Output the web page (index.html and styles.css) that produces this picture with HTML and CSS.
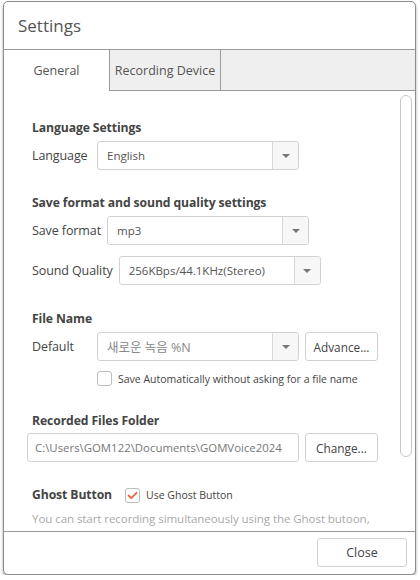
FILE: index.html
```html
<!DOCTYPE html>
<html>
<head>
<meta charset="utf-8">
<link rel="stylesheet" href="styles.css">
</head>
<body>
<div class="window">
  <div class="titlebar">Settings</div>
  <div class="tabs">
    <div class="tab active">General</div>
    <div class="tab">Recording Device</div>
    <div class="tab-fill"></div>
  </div>
  <div class="body">
    <div class="content">
      <div class="heading h-lang">Language Settings</div>
      <div class="row r-lang">
        <span class="label l-lang">Language</span>
        <div class="select"><span class="value">English</span><span class="arrow"><i></i></span></div>
      </div>

      <div class="heading h-fmt">Save format and sound quality settings</div>
      <div class="row r-fmt">
        <span class="label">Save format</span>
        <div class="select"><span class="value">mp3</span><span class="arrow"><i></i></span></div>
      </div>
      <div class="row r-qual">
        <span class="label">Sound Quality</span>
        <div class="select"><span class="value">256KBps/44.1KHz(Stereo)</span><span class="arrow"><i></i></span></div>
      </div>

      <div class="heading h-file">File Name</div>
      <div class="row r-file">
        <span class="label l-lang">Default</span>
        <div class="select"><span class="value kr">새로운 녹음 %N</span><span class="arrow"><i></i></span></div>
        <div class="btn btn-small">Advance...</div>
      </div>
      <div class="check-row">
        <span class="checkbox"></span>
        <span class="check-text">Save Automatically without asking for a file name</span>
      </div>

      <div class="heading h-folder">Recorded Files Folder</div>
      <div class="row r-folder">
        <div class="path">C:\Users\GOM122\Documents\GOMVoice2024</div>
        <div class="btn btn-small">Change...</div>
      </div>

      <div class="ghost-row">
        <span class="heading">Ghost Button</span>
        <span class="checkbox checked"><svg width="11" height="9" viewBox="0 0 11 9"><path d="M1.5 4.5 L4.2 7.2 L9.5 1.8" fill="none" stroke="#f0643f" stroke-width="1.8" stroke-linecap="round" stroke-linejoin="round"/></svg></span>
        <span class="check-text">Use Ghost Button</span>
      </div>
      <div class="desc">You can start recording simultaneously using the Ghost butoon,</div>
    </div>
    <div class="scrollbar"><div class="thumb"></div></div>
  </div>
  <div class="footer">
    <div class="btn close">Close</div>
  </div>
</div>
</body>
</html>
```
FILE: styles.css
```css
html, body {
  margin: 0;
  padding: 0;
  background: #ffffff;
}
body {
  font-family: "Open Sans", "Noto Sans CJK KR", sans-serif;
  color: #444;
}
.window {
  margin: 1px 0 0 3px;
  width: 411px;
  height: 572px;
  border: 1px solid #8c8c8c;
  border-radius: 5px;
  box-shadow: 0 2px 3px rgba(0,0,0,0.35);
  display: flex;
  flex-direction: column;
  overflow: hidden;
  background: #fff;
}
.titlebar {
  height: 47px;
  border-bottom: 1px solid #9a9a9a;
  padding-left: 14px;
  display: flex;
  align-items: center;
  font-size: 17px;
  color: #555;
  flex: none;
}
.tabs {
  display: flex;
  height: 41px;
  flex: none;
}
.tab {
  display: flex;
  align-items: center;
  justify-content: center;
  font-size: 12.5px;
  color: #555;
  background: #efefef;
  border-right: 1px solid #9a9a9a;
  border-bottom: 1px solid #9a9a9a;
  box-sizing: border-box;
  width: 111px;
}
.tab.active {
  background: #fff;
  border-bottom: none;
  width: 106px;
}
.tab-fill {
  flex: 1;
  background: #efefef;
  border-bottom: 1px solid #9a9a9a;
}
.body {
  display: flex;
  height: 440px;
  flex: none;
  overflow: hidden;
}
.content {
  flex: 1;
  padding: 28px 0 0 28px;
  overflow: hidden;
}
.scrollbar {
  width: 12px;
  flex: none;
  margin-right: 3px;
  padding-top: 4px;
}
.thumb {
  height: 362px;
  box-sizing: border-box;
  border: 1px solid #c6c6c6;
  border-radius: 6px;
}
.heading {
  font-size: 12.2px;
  font-weight: bold;
  color: #444;
  line-height: 18px;
  letter-spacing: -0.1px;
}
.row {
  display: flex;
  align-items: center;
  gap: 6px;
}
.label {
  font-size: 12.5px;
  color: #444;
  letter-spacing: -0.1px;
}
.l-lang {
  min-width: 59px;
}
.select {
  width: 202px;
  height: 29px;
  box-sizing: border-box;
  border: 1px solid #d2d2d2;
  border-radius: 3px;
  display: flex;
  align-items: stretch;
}
.value {
  flex: 1;
  display: flex;
  align-items: center;
  padding-left: 9px;
  font-size: 11.5px;
  color: #555;
}
.value.kr {
  color: #888;
  font-size: 12.5px;
}
.arrow {
  width: 25px;
  border-left: 1px solid #d8d8d8;
  background: #f7f7f7;
  border-radius: 0 3px 3px 0;
  display: flex;
  align-items: center;
  justify-content: center;
}
.arrow i {
  width: 0;
  height: 0;
  border-left: 4px solid transparent;
  border-right: 4px solid transparent;
  border-top: 4px solid #777;
}
.btn {
  height: 29px;
  box-sizing: border-box;
  border: 1px solid #d2d2d2;
  border-radius: 3px;
  display: flex;
  align-items: center;
  justify-content: center;
  font-size: 11.8px;
  color: #444;
  background: #fff;
}
.btn-small {
  width: 73px;
}
.h-lang { margin-bottom: 4px; }
.h-fmt { margin-top: 24px; margin-bottom: 4px; }
.r-qual { margin-top: 11px; }
.h-file { margin-top: 25px; margin-bottom: 4px; }
.check-row {
  display: flex;
  align-items: center;
  gap: 6px;
  margin: 10px 0 0 65px;
}
.checkbox {
  width: 15px;
  height: 15px;
  box-sizing: border-box;
  border: 1px solid #bdbdbd;
  border-radius: 3px;
  display: flex;
  align-items: center;
  justify-content: center;
  flex: none;
}
.check-text {
  font-size: 10.5px;
  color: #444;
}
.h-folder { margin-top: 26px; margin-bottom: 3px; }
.r-folder {
  margin-left: -5px;
}
.path {
  width: 272px;
  height: 29px;
  box-sizing: border-box;
  border: 1px solid #d2d2d2;
  border-radius: 3px;
  display: flex;
  align-items: center;
  padding-left: 7px;
  font-size: 11.4px;
  color: #777;
  white-space: nowrap;
}
.ghost-row {
  display: flex;
  align-items: center;
  margin-top: 24px;
  gap: 6px;
}
.ghost-row .checkbox {
  margin-left: 7px;
}
.desc {
  margin-top: 6px;
  font-size: 11.6px;
  color: #aaa;
  line-height: 18px;
  white-space: nowrap;
  letter-spacing: -0.1px;
}
.footer {
  flex: 1;
  border-top: 1px solid #9a9a9a;
  display: flex;
  justify-content: flex-end;
  align-items: flex-start;
  padding: 6px 8px 0 0;
}
.close {
  width: 90px;
  font-size: 12.5px;
}
```
